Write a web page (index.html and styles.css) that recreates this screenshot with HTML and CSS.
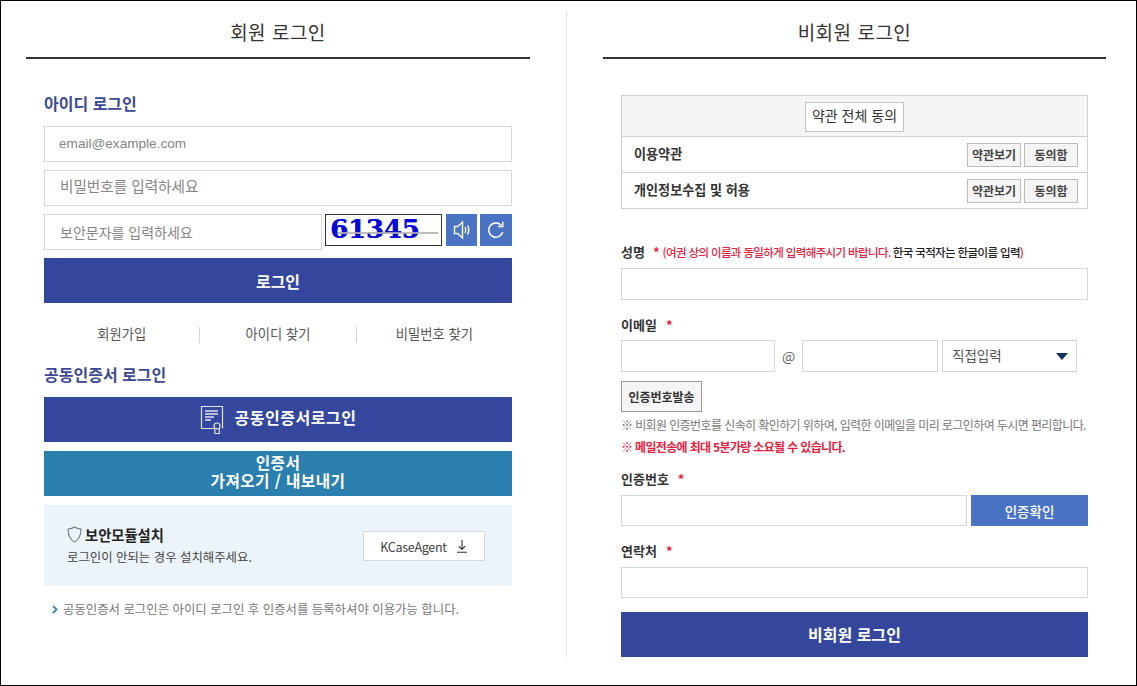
FILE: index.html
```html
<!DOCTYPE html>
<html lang="ko">
<head>
<meta charset="utf-8">
<title>로그인</title>
<link rel="stylesheet" href="styles.css">
</head>
<body>
<div class="frame">
  <section class="panel panel-left">
    <h2 class="panel-title">회원 로그인</h2>
    <div class="panel-body body-left">
      <h3 class="section-title">아이디 로그인</h3>
      <input class="field field-login field-email" type="text" placeholder="email@example.com">
      <input class="field field-login field-pass" type="password" placeholder="비밀번호를 입력하세요">
      <div class="captcha-row">
        <input class="field field-login field-captcha" type="text" placeholder="보안문자를 입력하세요">
        <div class="captcha-img"><span class="captcha-text">61345</span><span class="captcha-line"></span></div>
        <button class="icon-btn icon-audio" type="button" aria-label="음성">
          <svg width="22" height="22" viewBox="0 0 22 22" fill="none" stroke="#fff" stroke-width="1.4"><path d="M3.500 7.500h3.200L11.500 3v16l-4.800-4.500H3.500z"/><path d="M14 8c1 1.800 1 4.200 0 6M16.500 6.500c1.600 2.800 1.600 6.200 0 9"/></svg>
        </button>
        <button class="icon-btn icon-refresh" type="button" aria-label="새로고침">
          <svg width="22" height="22" viewBox="0 0 22 22" fill="none" stroke="#fff" stroke-width="1.600"><path d="M17.800 13A7.200 7.200 0 1 1 16.200 6.200"/><path d="M17.800 2.800v4.700h-4.700" stroke-width="1.400"/></svg>
        </button>
      </div>
      <button class="btn-primary btn-login" type="button">로그인</button>
      <ul class="link-row">
        <li>회원가입</li>
        <li>아이디 찾기</li>
        <li>비밀번호 찾기</li>
      </ul>
      <h3 class="section-title section-cert">공동인증서 로그인</h3>
      <button class="btn-primary btn-cert" type="button">
        <svg width="24" height="30" viewBox="0 0 24 30" fill="none" stroke="#dfe4f5" stroke-width="1.200"><path d="M17 23.500H1.500V1.500h21v22"/><path d="M5 6h13M5 9h13M5 12h9M5 15h6" stroke-width="1.400"/><circle cx="17" cy="21" r="3"/><path d="M14.800 23.500v5h4.500v-5"/></svg>
        <span>공동인증서로그인</span>
      </button>
      <button class="btn-teal" type="button">인증서<br>가져오기 / 내보내기</button>
      <div class="module-box">
        <div class="module-text">
          <p class="module-title">
            <svg width="15" height="17" viewBox="0 0 15 17" fill="none" stroke="#6d7a86" stroke-width="1.100"><path d="M7.500 1C5.500 2.300 3.300 2.900 1 3c0 5.500 1.500 10.500 6.500 13 5-2.500 6.500-7.500 6.500-13-2.300-.1-4.500-.7-6.500-2z"/></svg>
            <span>보안모듈설치</span>
          </p>
          <p class="module-desc">로그인이 안되는 경우 설치해주세요.</p>
        </div>
        <button class="btn-agent" type="button">
          <span>KCaseAgent</span>
          <svg width="12" height="13" viewBox="0 0 12 13" fill="none" stroke="#333" stroke-width="1.100"><path d="M6 0v9M2.800 6.200 6 9.400l3.200-3.200M1 12.300h10"/></svg>
        </button>
      </div>
      <p class="cert-note"><svg width="6" height="9" viewBox="0 0 6 9" fill="none" stroke="#2a7fae" stroke-width="1.800"><path d="M1 .8 4.500 4.500 1 8.200"/></svg><span>공동인증서 로그인은 아이디 로그인 후 인증서를 등록하셔야 이용가능 합니다.</span></p>
    </div>
  </section>
  <div class="divider"></div>
  <section class="panel panel-right">
    <h2 class="panel-title">비회원 로그인</h2>
    <div class="panel-body body-right">
      <div class="terms">
        <div class="terms-head"><button class="btn-all" type="button">약관 전체 동의</button></div>
        <div class="terms-row">
          <strong>이용약관</strong>
          <button class="btn-mini" type="button">약관보기</button>
          <button class="btn-mini" type="button">동의함</button>
        </div>
        <div class="terms-row">
          <strong>개인정보수집 및 허용</strong>
          <button class="btn-mini" type="button">약관보기</button>
          <button class="btn-mini" type="button">동의함</button>
        </div>
      </div>
      <label class="label label-name">성명<i class="req">*</i><span class="hint-red">(여권 상의 이름과 동일하게 입력해주시기 바랍니다.</span><span class="hint-dark">한국 국적자는 한글이름 입력</span><span class="hint-red">)</span></label>
      <input class="field field-guest" type="text">
      <label class="label label-email">이메일<i class="req">*</i></label>
      <div class="email-row">
        <input class="field field-guest email-id" type="text">
        <span class="at">@</span>
        <input class="field field-guest email-domain" type="text">
        <div class="select">직접입력<span class="caret"></span></div>
      </div>
      <button class="btn-send" type="button">인증번호발송</button>
      <p class="note-gray">※ 비회원 인증번호를 신속히 확인하기 위하여, 입력한 이메일을 미리 로그인하여 두시면 편리합니다.</p>
      <p class="note-red">※ 메일전송에 최대 5분가량 소요될 수 있습니다.</p>
      <label class="label label-code">인증번호<i class="req">*</i></label>
      <div class="code-row">
        <input class="field field-guest code-input" type="text">
        <button class="btn-verify" type="button">인증확인</button>
      </div>
      <label class="label label-phone">연락처<i class="req">*</i></label>
      <input class="field field-guest" type="text">
      <button class="btn-primary btn-guest" type="button">비회원 로그인</button>
    </div>
  </section>
</div>
</body>
</html>
```
FILE: styles.css
```css
* { box-sizing: border-box; }
html, body { margin: 0; padding: 0; }
body {
  background: #fff;
  color: #222;
  font-family: "Noto Sans CJK KR", "Noto Sans", sans-serif;
  overflow: hidden;
}
h2, h3, p, ul { margin: 0; padding: 0; }
button { font-family: inherit; cursor: pointer; }
.frame {
  width: 1137px;
  height: 686px;
  border: 1px solid #000;
  display: flex;
  align-items: flex-start;
}
.panel-left { width: 565px; padding: 0 36px 0 25px; flex: none; }
.panel-right { width: 533px; margin-left: 36px; flex: none; }
.divider { width: 1px; height: 647px; margin-top: 9px; background: #e6e6e6; flex: none; }
.panel-title {
  height: 58px;
  padding-top: 19px;
  line-height: 24px;
  font-size: 19px;
  font-weight: 400;
  letter-spacing: .5px;
  text-align: center;
  color: #333;
  border-bottom: 2px solid #333;
}
.panel-right .panel-title { width: 503px; }
.body-left { padding: 32px 18px 0; }
.body-right { width: 503px; padding: 36px 18px 0; }
.section-title {
  font-size: 16px;
  line-height: 24px;
  font-weight: 700;
  color: #3b4a92;
}
.field {
  display: block;
  width: 100%;
  border: 1px solid #d3d8dc;
  background: #fff;
  outline: 0;
  font-family: "Noto Sans CJK KR", sans-serif;
}
.field-login {
  height: 36px;
  margin-top: 8px;
  padding: 0 15px;
  font-size: 14px;
}
.field::placeholder { color: #858585; opacity: 1; }
.field-email {
  margin-top: 11px;
  padding-bottom: 2px;
  padding-left: 14px;
  font-family: "Liberation Sans", sans-serif;
  font-size: 13.600px;
}
.field-pass { padding-bottom: 6px; font-size: 14.600px; }
.captcha-row { display: flex; align-items: flex-start; margin-top: 8px; }
.field-captcha { width: 278px; margin-top: 0; flex: none; }
.captcha-img {
  position: relative;
  width: 117px;
  height: 32px;
  margin-left: 3px;
  border: 1px solid #333;
  overflow: hidden;
  flex: none;
}
.captcha-text {
  position: absolute;
  left: 4px;
  top: -3px;
  font-family: "DejaVu Serif", serif;
  font-weight: 700;
  font-size: 26px;
  line-height: 34px;
  letter-spacing: -.2px;
  color: #0a0ad6;
  text-shadow: .4px 0 0 #0a0ad6;
}
.captcha-line {
  position: absolute;
  left: 12px;
  right: 3px;
  top: 17px;
  height: 2px;
  background: #b0b0b0;
  opacity: .85;
}
.icon-btn {
  height: 32px;
  border: 0;
  padding: 0;
  background: #4a73c4;
  display: flex;
  align-items: center;
  justify-content: center;
  flex: none;
}
.icon-audio { width: 31px; margin-left: 4px; }
.icon-refresh { width: 32px; margin-left: 3px; }
.btn-primary {
  display: flex;
  align-items: center;
  justify-content: center;
  width: 100%;
  height: 45px;
  border: 0;
  background: #34479c;
  color: #fff;
  font-weight: 700;
  font-size: 16px;
}
.btn-login { margin-top: 8px; }
.link-row {
  list-style: none;
  display: flex;
  margin-top: 24px;
  height: 16px;
}
.link-row li {
  flex: 1;
  text-align: center;
  font-size: 13.300px;
  line-height: 14px;
  color: #555;
  border-left: 1px solid #d5d5d5;
}
.link-row li:first-child { border-left: 0; }
.section-cert { margin-top: 19px; }
.btn-cert { gap: 11px; margin-top: 11px; letter-spacing: .5px; }
.btn-cert span { padding-bottom: 6px; }
.btn-teal {
  display: block;
  width: 100%;
  height: 45px;
  margin-top: 9px;
  padding: 0 0 3px;
  border: 0;
  background: #2a7fae;
  color: #fff;
  font-size: 15.700px;
  font-weight: 700;
  line-height: 18px;
  letter-spacing: .4px;
}
.module-box {
  display: flex;
  align-items: center;
  justify-content: space-between;
  height: 81px;
  margin-top: 9px;
  padding: 0 27px 0 23px;
  background: #ecf4fa;
}
.module-title {
  display: flex;
  align-items: center;
  gap: 3px;
  font-size: 14.300px;
  line-height: 20px;
  font-weight: 700;
  color: #222;
}
.module-desc { margin-top: 2px; font-size: 12.400px; line-height: 20px; color: #444; }
.btn-agent {
  display: flex;
  align-items: center;
  justify-content: center;
  gap: 9px;
  width: 122px;
  height: 30px;
  margin-top: 1px;
  padding: 0;
  border: 1px solid #d3d8dc;
  background: #fff;
  color: #444;
  font-size: 12.500px;
  letter-spacing: -.3px;
}
.cert-note {
  display: flex;
  align-items: center;
  gap: 5px;
  margin: 14px 0 0 8px;
  font-size: 12.400px;
  line-height: 18px;
  color: #777;
}
.terms { border: 1px solid #cfcfcf; height: 114px; }
.terms-head {
  height: 41px;
  padding-top: 6px;
  text-align: center;
  background: #f5f5f5;
  border-bottom: 1px solid #cfcfcf;
}
.btn-all {
  width: 99px;
  height: 30px;
  padding: 0 0 4px;
  border: 1px solid #c4c4c4;
  background: #fff;
  color: #333;
  font-size: 14px;
}
.terms-row {
  display: flex;
  align-items: center;
  gap: 3px;
  height: 36px;
  padding: 0 9px 0 12px;
  border-bottom: 1px solid #cfcfcf;
}
.terms-row:last-child { height: 35px; border-bottom: 0; }
.terms-row strong { margin-right: auto; padding-bottom: 2px; font-size: 13.100px; color: #333; font-weight: 700; }
.btn-mini {
  width: 54px;
  height: 24px;
  padding: 0 0 1px;
  border: 1px solid #bbb;
  background: #f5f5f5;
  color: #444;
  font-size: 12px;
  font-weight: 700;
}
.label {
  display: block;
  font-size: 13px;
  line-height: 20px;
  font-weight: 700;
  color: #333;
}
.req { font-style: normal; color: #e8213f; margin-left: 9px; }
.label-name { margin-top: 33px; }
.label-name .req { margin-left: 8px; }
.hint-red, .hint-dark { font-size: 11.500px; font-weight: 500; letter-spacing: -.63px; }
.hint-red { color: #e8213f; margin-left: 3px; }
.hint-dark { color: #222; margin-left: 2px; }
.hint-dark + .hint-red { margin-left: 0; }
.field-guest { height: 32px; }
.label-name + .field-guest { margin-top: 6px; }
.label-email { margin-top: 15px; }
.email-row { display: flex; align-items: center; margin-top: 5px; }
.email-id { width: 154px; }
.at { width: 27px; text-align: center; font-size: 14px; color: #666; }
.email-domain { width: 136px; }
.select {
  position: relative;
  width: 135px;
  height: 32px;
  margin-left: 4px;
  padding-left: 9px;
  border: 1px solid #d3d8dc;
  font-size: 13.500px;
  line-height: 29px;
  color: #555;
}
.caret {
  position: absolute;
  right: 8px;
  top: 12px;
  border-left: 6px solid transparent;
  border-right: 6px solid transparent;
  border-top: 7px solid #12305c;
}
.btn-send {
  display: block;
  width: 81px;
  height: 31px;
  margin-top: 9px;
  padding: 0;
  border: 1px solid #9a9a9a;
  background: #f5f5f5;
  color: #333;
  font-size: 12px;
  font-weight: 700;
}
.note-gray, .note-red {
  font-size: 12px;
  line-height: 20px;
  white-space: nowrap;
}
.note-gray { margin-top: 3px; color: #777; letter-spacing: -.6px; }
.note-red { margin-top: 2px; color: #e8213f; font-weight: 700; letter-spacing: -.66px; }
.label-code { margin-top: 12px; }
.code-row { display: flex; gap: 4px; margin-top: 6px; }
.code-input { width: 346px; height: 31px; }
.btn-verify {
  flex: 1;
  height: 31px;
  padding: 0;
  border: 0;
  background: #4a73c4;
  color: #fff;
  font-size: 13.500px;
  font-weight: 500;
}
.label-phone { margin-top: 15px; }
.label-phone + .field-guest { height: 31px; margin-top: 6px; }
.btn-guest { margin-top: 14px; padding-bottom: 2px; }
```
